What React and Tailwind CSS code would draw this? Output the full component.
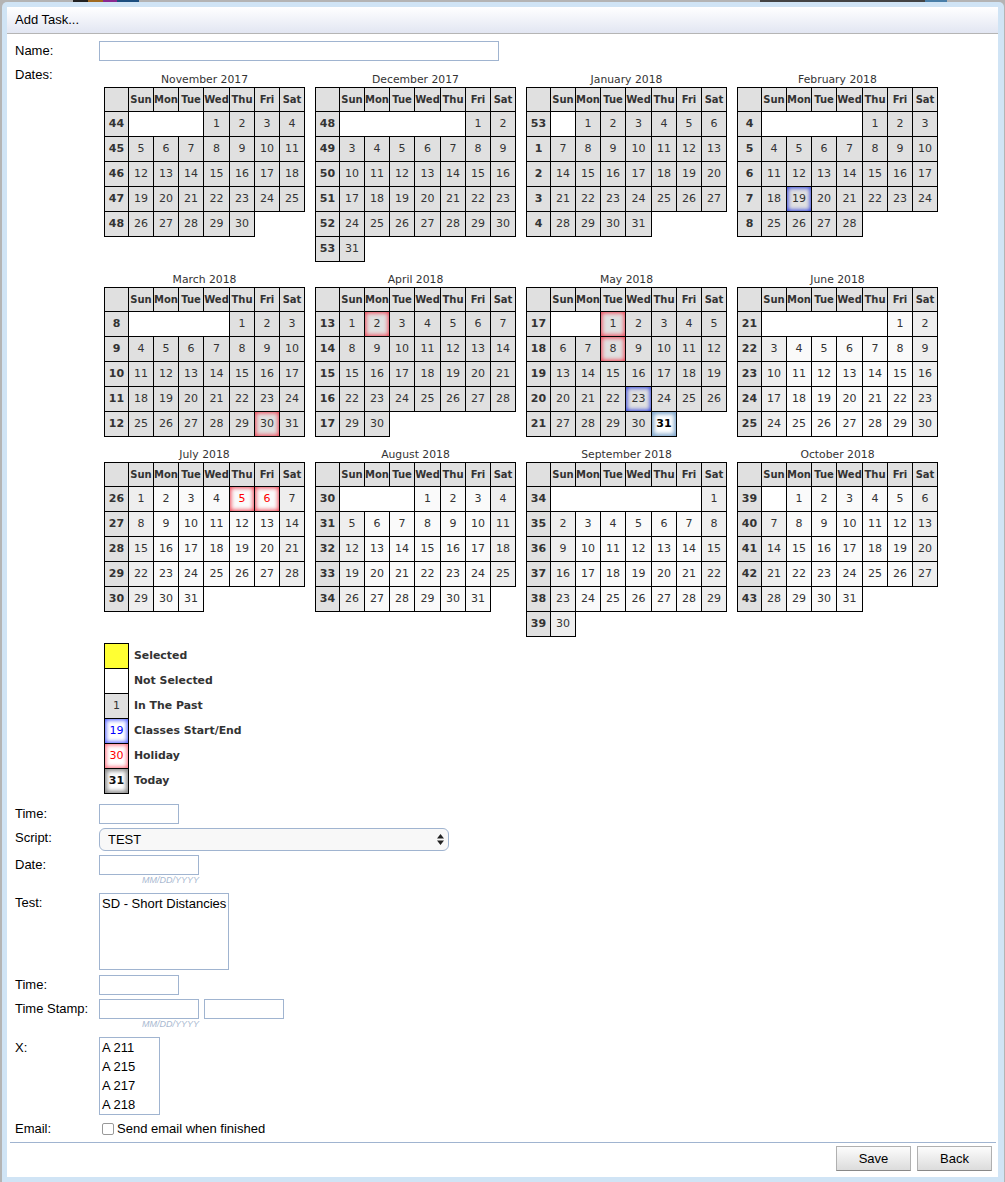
import clsx from 'clsx';

const DAY_NAMES = ['Sun', 'Mon', 'Tue', 'Wed', 'Thu', 'Fri', 'Sat'];

// first = weekday of the 1st, week = number of the first row
const months = [
  { name: 'November 2017', key: '2017-11', first: 3, days: 30, week: 44 },
  { name: 'December 2017', key: '2017-12', first: 5, days: 31, week: 48 },
  { name: 'January 2018', key: '2018-01', first: 1, days: 31, week: 53 },
  { name: 'February 2018', key: '2018-02', first: 4, days: 28, week: 4 },
  { name: 'March 2018', key: '2018-03', first: 4, days: 31, week: 8 },
  { name: 'April 2018', key: '2018-04', first: 0, days: 30, week: 13 },
  { name: 'May 2018', key: '2018-05', first: 2, days: 31, week: 17 },
  { name: 'June 2018', key: '2018-06', first: 5, days: 30, week: 21 },
  { name: 'July 2018', key: '2018-07', first: 0, days: 31, week: 26 },
  { name: 'August 2018', key: '2018-08', first: 3, days: 31, week: 30 },
  { name: 'September 2018', key: '2018-09', first: 6, days: 30, week: 34 },
  { name: 'October 2018', key: '2018-10', first: 1, days: 31, week: 39 },
];

const TODAY = '2018-05-31';
const holidays = ['2018-03-30', '2018-04-02', '2018-05-01', '2018-05-08', '2018-07-05', '2018-07-06'];
const classDates = ['2018-02-19', '2018-05-23'];

const buildRows = (month) => {
  const rows = [];
  let cells = [];
  for (let i = 0; i < month.first; i++) cells.push(null);
  for (let d = 1; d <= month.days; d++) {
    cells.push(d);
    if (cells.length === 7) {
      rows.push(cells);
      cells = [];
    }
  }
  if (cells.length) rows.push(cells);
  return rows;
};

const HeadCell = ({ children }) => (
  <th className="border border-black bg-[#e0e0e0] p-0 text-center text-[10px] font-bold text-[#333]">{children}</th>
);

const DayCell = ({ monthKey, day, weekday }) => {
  const date = `${monthKey}-${String(day).padStart(2, '0')}`;
  const isToday = date === TODAY;
  const isPast = date < TODAY;
  const isHoliday = holidays.includes(date);
  const isClass = classDates.includes(date);
  const isWeekend = weekday === 0 || weekday === 6;

  return (
    <td
      className={clsx(
        'border border-black p-0 text-center',
        isToday && 'bg-white font-bold text-black shadow-[inset_0_0_4px_2px_#7fa6cc]',
        !isToday && isPast && 'bg-[#e0e0e0] text-[#333]',
        !isToday && !isPast && isWeekend && 'bg-[#eeeeee] text-[#333]',
        !isToday && !isPast && !isWeekend && 'bg-[#fafafa] text-[#333]',
        isHoliday && 'shadow-[inset_0_0_4px_1px_#f04455]',
        isHoliday && !isPast && 'text-[#ff0000]',
        isClass && 'shadow-[inset_0_0_4px_1px_#3344dd]'
      )}
    >
      {day}
    </td>
  );
};

const MonthTable = ({ month }) => {
  const rows = buildRows(month);
  return (
    <div className="w-[201px]">
      <div className="h-[14px] text-center text-[10.8px] leading-[14px] text-[#333]">{month.name}</div>
      <table className="table-fixed border-collapse text-[11px]">
        <colgroup>
          <col className="w-[24px]" />
          <col className="w-[25px]" />
          <col className="w-[25px]" />
          <col className="w-[25px]" />
          <col className="w-[26px]" />
          <col className="w-[25px]" />
          <col className="w-[25px]" />
          <col className="w-[25px]" />
        </colgroup>
        <thead>
          <tr className="h-[24px]">
            <HeadCell />
            {DAY_NAMES.map((d) => (
              <HeadCell key={d}>{d}</HeadCell>
            ))}
          </tr>
        </thead>
        <tbody>
          {rows.map((cells, r) => {
            const weekNo = month.week + r > 53 ? month.week + r - 53 : month.week + r;
            const blanks = cells.filter((c) => c === null).length;
            return (
              <tr key={r} className="h-[25px]">
                <td className="border border-black bg-[#e0e0e0] p-0 text-center font-bold text-[#333]">{weekNo}</td>
                {blanks > 0 && <td colSpan={blanks} className="bg-white p-0" />}
                {cells.map((day, i) =>
                  day === null ? null : <DayCell key={day} monthKey={month.key} day={day} weekday={i} />
                )}
              </tr>
            );
          })}
        </tbody>
      </table>
    </div>
  );
};

const legend = [
  { label: 'Selected', cell: 'bg-[#ffff33]', text: '' },
  { label: 'Not Selected', cell: 'bg-white', text: '' },
  { label: 'In The Past', cell: 'bg-[#e0e0e0] text-[#333]', text: '1' },
  { label: 'Classes Start/End', cell: 'bg-white text-[#0000ff] shadow-[inset_0_0_4px_1px_#4455ff]', text: '19' },
  { label: 'Holiday', cell: 'bg-white text-[#ff0000] shadow-[inset_0_0_4px_1px_#ff6677]', text: '30' },
  { label: 'Today', cell: 'bg-white font-bold text-[#111] shadow-[inset_0_0_4px_2px_#888888]', text: '31' },
];

const Legend = () => (
  <table className="mt-[6px] table-fixed border-collapse text-[11px]">
    <colgroup>
      <col className="w-[24px]" />
      <col className="w-[160px]" />
    </colgroup>
    <tbody>
      {legend.map((row) => (
        <tr key={row.label} className="h-[25px]">
          <td className={clsx('border border-black p-0 text-center', row.cell)}>{row.text}</td>
          <td className="p-0 pl-[5px] text-[10.9px] font-bold text-[#333]">{row.label}</td>
        </tr>
      ))}
    </tbody>
  </table>
);

const Label = ({ children, className }) => (
  <label className={clsx('w-[84px] shrink-0 text-[13px] leading-[15px] text-black', className)}>{children}</label>
);

const TextInput = ({ className }) => (
  <input type="text" className={clsx('h-[20px] border border-[#a0b4d0] bg-white', className)} />
);

const DateHint = () => (
  <div className="h-[10px] text-right text-[9px] leading-[10px] text-[#a8b8d0] italic">MM/DD/YYYY</div>
);

const FooterButton = ({ children }) => (
  <button className="h-[25px] w-[75px] border border-[#b0b0b0] border-b-[#888] bg-gradient-to-b from-[#fcfcfc] to-[#dcdcdc] text-[13px] text-black">
    {children}
  </button>
);

const App = () => {
  return (
    <div className="flex h-[1182px] w-[1005px] flex-col overflow-hidden bg-[#b4b4b4] font-['Liberation_Sans',Arial,sans-serif]">
      {/* page behind the dialog, barely visible at the top */}
      <div className="flex h-[2px] shrink-0">
        <div className="w-[73px]" />
        <div className="h-full w-[15px] bg-[#222]" />
        <div className="h-full w-[15px] bg-[#a06a20]" />
        <div className="h-full w-[14px] bg-[#8a2a90]" />
        <div className="h-full w-[22px] bg-[#1d4f80]" />
        <div className="w-[621px]" />
        <div className="h-full w-[165px] bg-[#444]" />
        <div className="h-full w-[22px] bg-[#4a7fa8]" />
      </div>

      <div className="mr-[1px] ml-[2px] flex h-[1180px] flex-col rounded-t-[5px] bg-[#d0e4f5] pt-[5px] pr-[6px] pl-[5px]">
        <div className="flex min-h-0 flex-1 flex-col bg-white">
          <div className="h-[27px] shrink-0 border-b border-[#b5b5b5] bg-gradient-to-b from-white to-[#e2e6f2] pl-[8px] text-[13px] leading-[26px] text-black">
            Add Task...
          </div>

          <div className="flex flex-col pt-[7px] pl-[8px]">
            <div className="flex">
              <Label className="pt-[2px]">Name:</Label>
              <TextInput className="w-[400px]" />
            </div>

            <div className="mt-[6px] flex">
              <Label>Dates:</Label>
              <div className="ml-[5px] pt-[6px] font-['DejaVu_Sans',Verdana,sans-serif]">
                <div className="grid grid-cols-[repeat(4,211px)] gap-y-[11px]">
                  {months.map((m) => (
                    <MonthTable key={m.key} month={m} />
                  ))}
                </div>
                <Legend />
              </div>
            </div>

            <div className="mt-[10px] flex">
              <Label className="pt-[2px]">Time:</Label>
              <TextInput className="w-[80px]" />
            </div>

            <div className="mt-[4px] flex">
              <Label className="pt-[2px]">Script:</Label>
              <div className="relative h-[23px] w-[350px]">
                <select className="block h-full w-full appearance-none rounded-[6px] border border-[#a0b4d0] bg-[#f8f8f8] pl-[8px] text-[13px] text-black">
                  <option>TEST</option>
                </select>
                <svg className="absolute top-[6px] right-[5px]" width="7" height="11" viewBox="0 0 7 11">
                  <path d="M3.5 0 7 4.5H0z M3.5 11 0 6.5h7z" fill="#222" />
                </svg>
              </div>
            </div>

            <div className="mt-[4px] flex">
              <Label className="pt-[2px]">Date:</Label>
              <div className="w-[100px]">
                <TextInput className="block w-[100px]" />
                <DateHint />
              </div>
            </div>

            <div className="mt-[8px] flex">
              <Label className="pt-[2px]">Test:</Label>
              <div className="h-[77px] w-[130px] border border-[#a0b4d0] px-[2px] pt-[1px] text-[13px] leading-[18px] whitespace-nowrap text-black">
                SD - Short Distancies
              </div>
            </div>

            <div className="mt-[5px] flex">
              <Label className="pt-[2px]">Time:</Label>
              <TextInput className="w-[80px]" />
            </div>

            <div className="mt-[4px] flex">
              <Label className="pt-[2px]">Time Stamp:</Label>
              <div className="w-[100px]">
                <TextInput className="block w-[100px]" />
                <DateHint />
              </div>
              <TextInput className="ml-[5px] w-[80px]" />
            </div>

            <div className="mt-[8px] flex">
              <Label className="pt-[3px]">X:</Label>
              <div className="h-[78px] w-[61px] border border-[#a0b4d0] pl-[2px] text-[13px] leading-[19px] text-black">
                <div>A 211</div>
                <div>A 215</div>
                <div>A 217</div>
                <div>A 218</div>
              </div>
            </div>

            <div className="mt-[6px] flex items-center">
              <Label>Email:</Label>
              <label className="flex items-center text-[13px] leading-[15px] text-black">
                <input type="checkbox" className="mr-[3px] ml-[3px] h-[12px] w-[12px] appearance-none rounded-[2px] border border-[#999] bg-white" />
                Send email when finished
              </label>
            </div>
          </div>

          <div className="mt-[6px] mr-[2px] ml-[3px] flex justify-end gap-[6px] border-t border-[#a0b4d0] pt-[3px] pr-[4px]">
            <FooterButton>Save</FooterButton>
            <FooterButton>Back</FooterButton>
          </div>
        </div>
        <div className="h-[5px] shrink-0" />
      </div>
    </div>
  );
};

export default App;
